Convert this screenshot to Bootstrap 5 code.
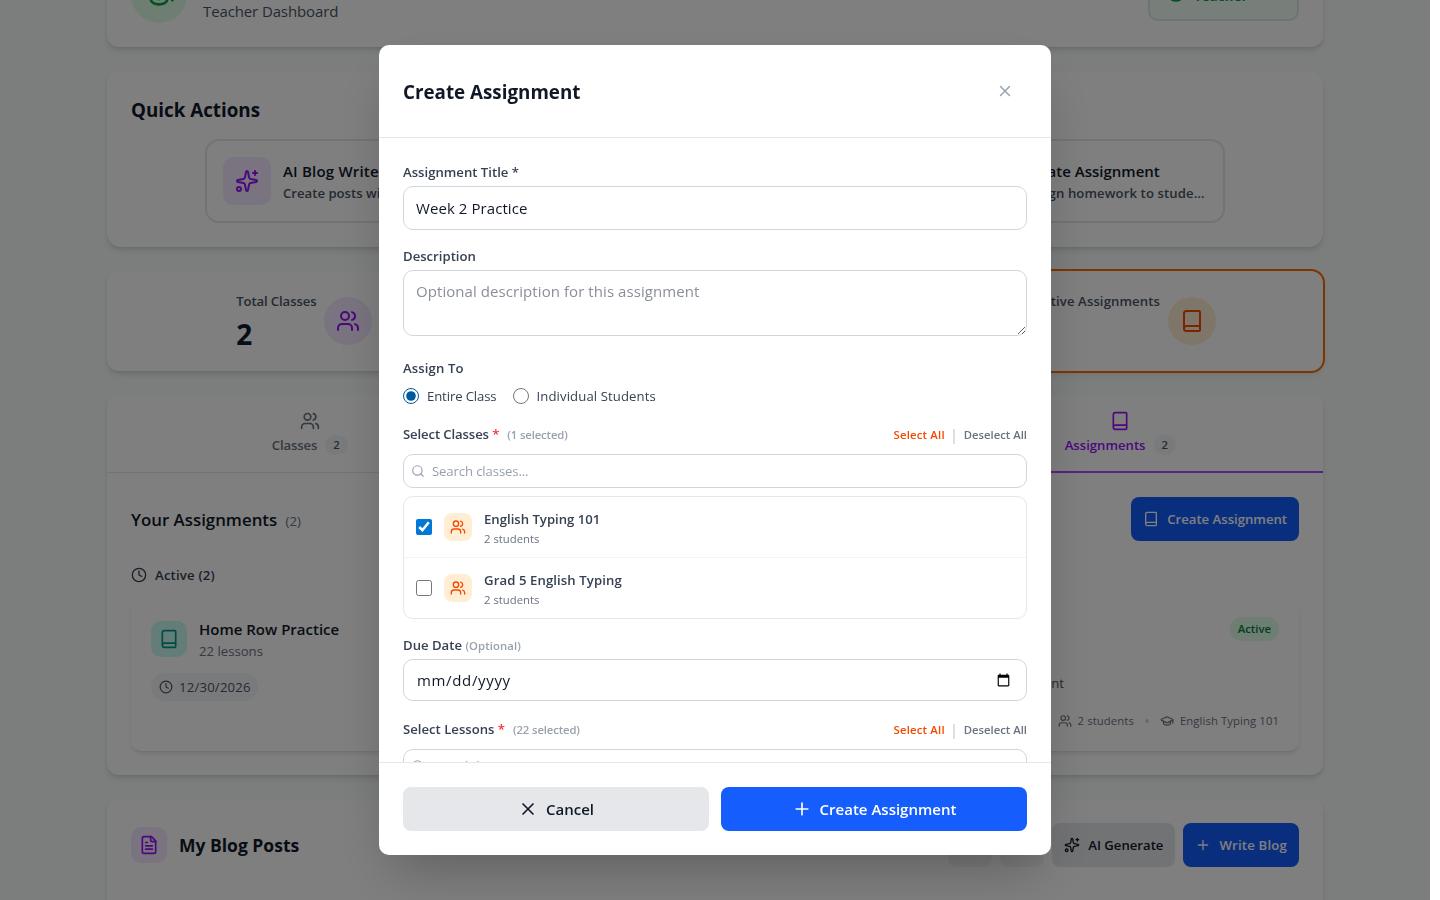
<!DOCTYPE html>
<html lang="en">
<head>
  <meta charset="UTF-8">
  <meta name="viewport" content="width=device-width, initial-scale=1">
  <title>Teacher Dashboard</title>
  <link href="https://cdn.jsdelivr.net/npm/bootstrap@5.3.0/dist/css/bootstrap.min.css" rel="stylesheet">
  <style>
    :root {
      --ink: #101828;
      --text: #364153;
      --soft: #4a5565;
      --dim: #6a7282;
      --faint: #99a1af;
      --line: #e5e7eb;
      --field: #d1d5dc;
      --blue: #155dfc;
      --purple: #9810fa;
      --orange: #f54900;
    }
    body {
      font-family: "Open Sans", "Noto Sans", sans-serif;
      font-size: 15px;
      line-height: 24px;
      color: var(--ink);
      background: #fff;
      overflow: hidden;
    }
    svg { flex-shrink: 0; fill: none; stroke: currentColor; stroke-width: 2; stroke-linecap: round; stroke-linejoin: round; }
    .i14 { width: 14px; height: 14px; }
    .i16 { width: 16px; height: 16px; }
    .i18 { width: 18px; height: 18px; }
    .i20 { width: 20px; height: 20px; }
    .i24 { width: 24px; height: 24px; }
    .i32 { width: 32px; height: 32px; }

    .t12 { font-size: 11.3px; line-height: 16px; }
    .t14 { font-size: 13.15px; line-height: 20px; }
    .t18 { font-size: 16.85px; line-height: 28px; }
    .t20 { font-size: 18.8px; line-height: 28px; }
    .t30 { font-size: 28px; line-height: 38px; }
    .tight { letter-spacing: -.12px; }
    .loose { letter-spacing: .1px; }
    .looser { letter-spacing: .2px; }
    .nudge { padding-top: 2px; }
    .c-text { color: var(--text); }
    .c-soft { color: var(--soft); }
    .c-dim { color: var(--dim); }
    .c-faint { color: var(--faint); }
    .c-orange { color: var(--orange); }
    .c-red { color: #fb2c36; }

    /* page behind the dialog */
    .screen { width: 1430px; height: 100vh; background: #f7fcf9; }
    .page-col { width: 1216px; margin-top: -57px; }
    .panel { background: #fff; border-radius: 12px; box-shadow: 0 4px 6px -1px rgba(0,0,0,.12), 0 2px 4px -2px rgba(0,0,0,.1); }
    .panel-lg { border-radius: 14px; }
    .avatar { width: 56px; height: 56px; background: #dcfce7; color: #00a63e; }
    .role-tag { width: 151px; height: 51px; border: 2px solid #dde9e2; border-radius: 10px; background: #f0fdf4; color: #00a63e; padding-left: 16px; }
    .quick { height: 176px; padding: 25px 24px; }
    .quick-row { width: 1020px; margin-top: 15px; }
    .quick-btn { width: 280px; height: 84px; border: 2px solid var(--line); border-radius: 14px; padding: 0 16px; }
    .sq48 { width: 48px; height: 48px; border-radius: 10px; }
    .sq36 { width: 36px; height: 36px; border-radius: 10px; }
    .sq28 { width: 28px; height: 28px; border-radius: 8px; }
    .tone-purple { background: #f3e8ff; color: var(--purple); }
    .tone-orange { background: #ffedd4; color: var(--orange); }
    .tone-teal { background: #cbfbf1; color: #009689; }
    .stat { height: 100px; }
    .stat-text { padding-bottom: 2px; }
    .stat-on { box-shadow: 0 0 0 2px #ff6900, 0 4px 6px -1px rgba(0,0,0,.1); }
    .tabs { border-bottom: 1px solid var(--line); height: 78px; }
    .tab { padding: 16px 0; height: 78px; color: var(--dim); border-bottom: 2px solid transparent; }
    .tab.on { color: var(--purple); border-color: #ad46ff; }
    .count { background: #f3f4f6; color: var(--soft); padding: 2px 8px; }
    .work { height: 150px; border-radius: 10px; padding: 16px 20px; box-shadow: 0 3px 5px -1px rgba(0,0,0,.12), 0 1px 2px -1px rgba(0,0,0,.1); }
    .due-pill { background: #f3f4f6; color: var(--soft); height: 28px; padding: 0 7px 0 8px; margin-top: 12px; gap: 6px; }
    .live-pill { background: #dcfce7; color: #008236; height: 24px; padding: 4px 8px; }
    .work-note { width: 321px; white-space: nowrap; }
    .work-meta { margin-top: 20px; gap: 6px; }
    .bullet { width: 4px; height: 4px; margin: 0 5px; background: var(--field); }
    .act { height: 44px; border-radius: 8px; padding: 0 12px; border: 0; font-weight: 600; }
    .act-blue { background: var(--blue); color: #fff; }
    .act-gray { background: var(--line); color: var(--ink); }
    .act-ghost { width: 44px; background: #f3f4f6; }
    .blog-title { font-size: 17.5px; }

    /* dialog */
    .veil { width: 1430px; height: 100vh; background: rgba(0,0,0,.5); }
    .dialog { width: 672px; height: 810px; background: #fff; border-radius: 10px; box-shadow: 0 25px 50px -12px rgba(0,0,0,.25); }
    .dialog-head { height: 93px; padding: 0 24px; border-bottom: 1px solid var(--line); }
    .dialog-x { width: 44px; height: 44px; }
    .dialog-body { padding: 24px 24px 0; min-height: 0; }
    .dialog-foot { padding: 24px; border-top: 1px solid var(--line); }
    .field { border: 1px solid var(--field); border-radius: 10px; padding: 8px 12px; color: var(--ink); width: 100%; display: block; outline: 0; background: #fff; letter-spacing: .07px; }
    .field::placeholder { color: #8a8f98; }
    .field-title { height: 44px; }
    .field-desc { height: 66px; margin-bottom: 22px; }
    .field-date { height: 42px; padding: 8px 13px; letter-spacing: .65px; }
    .pick-head { height: 24px; margin: 17px 0 7px; }
    .pick-label { padding-bottom: 2px; }
    .find { height: 34px; border: 1px solid var(--field); border-radius: 10px; padding: 0 7px; gap: 7px; }
    .pick { border: 1px solid var(--line); border-radius: 10px; }
    .pick-row { height: 60px; padding: 0 12px; gap: 12px; }
    .pick-row + .pick-row { border-top: 1px solid #f3f4f6; height: 61px; }
    .pick-sub { line-height: 18px; margin-bottom: -2px; padding-top: 1px; }
    input[type=checkbox], input[type=radio] { width: 16px; height: 16px; margin: 0; accent-color: #0078d7; }
    input[type=radio] { accent-color: #005a9e; }
    .sep { width: 2px; height: 15px; margin: 3px 9px 0 8px; background: #dcdfe5; }
    .foot-btn { height: 44px; border: 0; border-radius: 8px; font-weight: 600; }
  </style>
</head>
<body>
  <svg class="d-none">
    <symbol id="users" viewBox="0 0 24 24"><path d="M16 21v-2a4 4 0 0 0-4-4H6a4 4 0 0 0-4 4v2"/><circle cx="9" cy="7" r="4"/><path d="M22 21v-2a4 4 0 0 0-3-3.87"/><path d="M16 3.13a4 4 0 0 1 0 7.75"/></symbol>
    <symbol id="book" viewBox="0 0 24 24"><path d="M4 19.5v-15A2.5 2.5 0 0 1 6.5 2H19a1 1 0 0 1 1 1v18a1 1 0 0 1-1 1H6.5a1 1 0 0 1 0-5H20"/></symbol>
    <symbol id="sparkles" viewBox="0 0 24 24"><path d="M11.017 2.814a1 1 0 0 1 1.966 0l1.051 5.558a2 2 0 0 0 1.594 1.594l5.558 1.051a1 1 0 0 1 0 1.966l-5.558 1.051a2 2 0 0 0-1.594 1.594l-1.051 5.558a1 1 0 0 1-1.966 0l-1.051-5.558a2 2 0 0 0-1.594-1.594l-5.558-1.051a1 1 0 0 1 0-1.966l5.558-1.051a2 2 0 0 0 1.594-1.594z"/><path d="M20 2v4M22 4h-4"/><circle cx="4" cy="20" r="2"/></symbol>
    <symbol id="clock" viewBox="0 0 24 24"><circle cx="12" cy="12" r="10"/><path d="M12 6v6l4 2"/></symbol>
    <symbol id="file" viewBox="0 0 24 24"><path d="M15 2H6a2 2 0 0 0-2 2v16a2 2 0 0 0 2 2h12a2 2 0 0 0 2-2V7Z"/><path d="M14 2v4a2 2 0 0 0 2 2h4M10 9H8M16 13H8M16 17H8"/></symbol>
    <symbol id="cap" viewBox="0 0 24 24"><path d="M21.42 10.922a1 1 0 0 0-.019-1.838L12.83 5.18a2 2 0 0 0-1.66 0L2.6 9.08a1 1 0 0 0 0 1.832l8.57 3.908a2 2 0 0 0 1.66 0z"/><path d="M22 10v6M6 12.5V16a6 3 0 0 0 12 0v-3.5"/></symbol>
    <symbol id="close" viewBox="0 0 24 24"><path d="M18 6 6 18M6 6l12 12"/></symbol>
    <symbol id="plus" viewBox="0 0 24 24"><path d="M5 12h14M12 5v14"/></symbol>
    <symbol id="search" viewBox="0 0 24 24"><circle cx="11" cy="11" r="8"/><path d="m21 21-4.3-4.3"/></symbol>
  </svg>

  <div class="screen overflow-hidden">
    <main class="page-col mx-auto d-flex flex-column gap-4">

      <section class="panel p-4 d-flex justify-content-between align-items-center">
        <div class="d-flex align-items-center gap-3">
          <div class="avatar rounded-circle d-flex align-items-center justify-content-center"><svg class="i32"><use href="#cap"/></svg></div>
          <div>
            <h1 class="t20 fw-bold mb-1">Welcome back</h1>
            <div class="c-soft tight">Teacher Dashboard</div>
          </div>
        </div>
        <div class="role-tag d-flex align-items-center gap-2">
          <svg class="i20"><use href="#cap"/></svg>
          <span class="fw-bold t14 looser nudge">Teacher</span>
        </div>
      </section>

      <section class="panel panel-lg quick">
        <h2 class="t20 fw-bold mb-0">Quick Actions</h2>
        <div class="quick-row mx-auto d-flex justify-content-between">
          <div class="quick-btn d-flex align-items-center">
            <div class="sq48 tone-purple d-flex align-items-center justify-content-center flex-shrink-0"><svg class="i24"><use href="#sparkles"/></svg></div>
            <div class="ms-2 ps-1 overflow-hidden">
              <div class="fw-semibold looser">AI Blog Writer</div>
              <div class="t14 fw-semibold c-soft text-truncate">Create posts with AI assistance</div>
            </div>
          </div>
          <div class="quick-btn d-flex align-items-center">
            <div class="sq48 tone-orange d-flex align-items-center justify-content-center flex-shrink-0"><svg class="i24"><use href="#book"/></svg></div>
            <div class="ms-2 ps-1 overflow-hidden">
              <div class="fw-semibold">Create Assignment</div>
              <div class="t14 fw-semibold c-soft text-truncate loose">Assign homework to students</div>
            </div>
          </div>
        </div>
      </section>

      <section class="d-flex gap-3">
        <div class="panel stat flex-fill w-100 d-flex align-items-center justify-content-center gap-2">
          <div class="stat-text">
            <div class="t14 fw-semibold c-soft mt-1 mb-1 tight">Total Classes</div>
            <div class="t30 fw-bold">2</div>
          </div>
          <div class="sq48 rounded-circle tone-purple d-flex align-items-center justify-content-center"><svg class="i24"><use href="#users"/></svg></div>
        </div>
        <div class="panel stat flex-fill w-100"></div>
        <div class="panel stat stat-on flex-fill w-100 d-flex align-items-center justify-content-center gap-2">
          <div class="stat-text">
            <div class="t14 fw-semibold c-soft mt-1 mb-1 loose">Active Assignments</div>
            <div class="t30 fw-bold">2</div>
          </div>
          <div class="sq48 rounded-circle tone-orange d-flex align-items-center justify-content-center"><svg class="i24"><use href="#book"/></svg></div>
        </div>
      </section>

      <section class="panel">
        <div class="tabs d-flex">
          <div class="tab w-100 d-flex flex-column align-items-center gap-1">
            <svg class="i20"><use href="#users"/></svg>
            <div class="d-flex align-items-center gap-2 t14 fw-semibold tight">Classes <span class="count rounded-pill t12">2</span></div>
          </div>
          <div class="tab w-100"></div>
          <div class="tab on w-100 d-flex flex-column align-items-center gap-1">
            <svg class="i20"><use href="#book"/></svg>
            <div class="d-flex align-items-center gap-2 t14 fw-semibold">Assignments <span class="count rounded-pill t12">2</span></div>
          </div>
        </div>
        <div class="p-4">
          <div class="d-flex justify-content-between align-items-center">
            <h2 class="t18 fw-semibold mb-0 nudge">Your Assignments <span class="t14 fw-normal c-dim ms-1">(2)</span></h2>
            <button class="act act-blue t14 d-flex align-items-center gap-2"><svg class="i16"><use href="#book"/></svg>Create Assignment</button>
          </div>
          <div class="d-flex align-items-center gap-2 t14 fw-semibold c-text mt-4 mb-3 looser"><svg class="i16"><use href="#clock"/></svg>Active (2)</div>
          <div class="d-flex">
            <div class="work rounded-end-0 w-100">
              <div class="d-flex align-items-center">
                <div class="sq36 tone-teal d-flex align-items-center justify-content-center"><svg class="i20"><use href="#book"/></svg></div>
                <div class="ms-2 ps-1">
                  <div class="fw-semibold">Home Row Practice</div>
                  <div class="t14 c-dim">22 lessons</div>
                </div>
              </div>
              <div class="due-pill rounded-pill d-inline-flex align-items-center t14 looser"><svg class="i14"><use href="#clock"/></svg>12/30/2026</div>
            </div>
            <div class="work rounded-start-0 w-100 d-flex flex-column">
              <div class="live-pill rounded-pill t12 fw-semibold align-self-end">Active</div>
              <div class="work-note t14 c-soft text-end ms-2 mt-4 pt-2">Home row typing assignment</div>
              <div class="work-meta d-flex align-items-center justify-content-end t12 c-dim loose">
                <svg class="i14"><use href="#users"/></svg><span>2 students</span>
                <span class="bullet rounded-circle"></span>
                <svg class="i14"><use href="#cap"/></svg><span>English Typing 101</span>
              </div>
            </div>
          </div>
        </div>
      </section>

      <section class="panel p-4 pb-5">
        <div class="d-flex align-items-center gap-2">
          <div class="sq36 tone-purple d-flex align-items-center justify-content-center"><svg class="i20"><use href="#file"/></svg></div>
          <h2 class="t18 fw-bold mb-0 ms-1 me-auto blog-title">My Blog Posts</h2>
          <button class="act act-ghost"></button>
          <button class="act act-ghost"></button>
          <button class="act act-gray t14 d-flex align-items-center gap-2"><svg class="i16"><use href="#sparkles"/></svg>AI Generate</button>
          <button class="act act-blue t14 d-flex align-items-center gap-2 looser"><svg class="i16"><use href="#plus"/></svg>Write Blog</button>
        </div>
      </section>
    </main>
  </div>

  <div class="veil position-fixed top-0 start-0 d-flex align-items-center justify-content-center">
    <div class="dialog d-flex flex-column overflow-hidden" role="dialog" aria-labelledby="dialogTitle">
      <div class="dialog-head d-flex align-items-center justify-content-between flex-shrink-0">
        <h2 id="dialogTitle" class="t20 fw-bold mb-0 nudge">Create Assignment</h2>
        <button class="dialog-x btn p-0 border-0 d-flex align-items-center justify-content-center c-faint" aria-label="Close"><svg class="i18"><use href="#close"/></svg></button>
      </div>

      <div class="dialog-body flex-fill overflow-hidden">
        <label class="t14 fw-semibold c-text d-block mb-1" for="title">Assignment Title *</label>
        <input id="title" class="field field-title mb-3" type="text" value="Week 2 Practice">

        <label class="t14 fw-semibold c-text d-block mb-1" for="desc">Description</label>
        <textarea id="desc" class="field field-desc" placeholder="Optional description for this assignment"></textarea>

        <div class="t14 fw-semibold c-text loose">Assign To</div>
        <div class="d-flex gap-3 mt-2 t14 c-text">
          <label class="d-flex align-items-center gap-2 tight"><input type="radio" name="target" checked>Entire Class</label>
          <label class="d-flex align-items-center gap-2 loose"><input type="radio" name="target">Individual Students</label>
        </div>

        <div class="pick-head d-flex align-items-center">
          <span class="pick-label t14 fw-semibold c-text tight">Select Classes <span class="c-red">*</span></span>
          <span class="t12 fw-semibold c-faint ms-2 me-auto tight">(1 selected)</span>
          <span class="t12 fw-semibold c-orange looser">Select All</span>
          <span class="sep"></span>
          <span class="t12 fw-semibold c-dim">Deselect All</span>
        </div>
        <div class="find d-flex align-items-center t14 c-faint mb-2 tight"><svg class="i14"><use href="#search"/></svg>Search classes...</div>
        <div class="pick mb-3">
          <div class="pick-row d-flex align-items-center">
            <input type="checkbox" checked>
            <div class="sq28 tone-orange d-flex align-items-center justify-content-center"><svg class="i16"><use href="#users"/></svg></div>
            <div>
              <div class="t14 fw-semibold c-text">English Typing 101</div>
              <div class="pick-sub t12 c-dim">2 students</div>
            </div>
          </div>
          <div class="pick-row d-flex align-items-center">
            <input type="checkbox">
            <div class="sq28 tone-orange d-flex align-items-center justify-content-center"><svg class="i16"><use href="#users"/></svg></div>
            <div>
              <div class="t14 fw-semibold c-text loose">Grad 5 English Typing</div>
              <div class="pick-sub t12 c-dim">2 students</div>
            </div>
          </div>
        </div>

        <label class="t14 fw-semibold c-text d-block mb-1" for="due">Due Date <span class="t12 c-faint loose">(Optional)</span></label>
        <input id="due" class="field field-date" type="date">

        <div class="pick-head d-flex align-items-center">
          <span class="pick-label t14 fw-semibold c-text">Select Lessons <span class="c-red">*</span></span>
          <span class="t12 fw-semibold c-faint ms-2 me-auto tight">(22 selected)</span>
          <span class="t12 fw-semibold c-orange looser">Select All</span>
          <span class="sep"></span>
          <span class="t12 fw-semibold c-dim">Deselect All</span>
        </div>
        <div class="find d-flex align-items-center t14 c-faint tight"><svg class="i14"><use href="#search"/></svg>Search lessons...</div>
      </div>

      <div class="dialog-foot d-flex flex-shrink-0">
        <button class="foot-btn act-gray w-100 d-flex align-items-center justify-content-center gap-2 me-2"><svg class="i20"><use href="#close"/></svg>Cancel</button>
        <button class="foot-btn act-blue w-100 d-flex align-items-center justify-content-center gap-2 ms-1"><svg class="i20"><use href="#plus"/></svg>Create Assignment</button>
      </div>
    </div>
  </div>
  <script src="https://cdn.jsdelivr.net/npm/bootstrap@5.3.0/dist/js/bootstrap.bundle.min.js"></script>
</body>
</html>
